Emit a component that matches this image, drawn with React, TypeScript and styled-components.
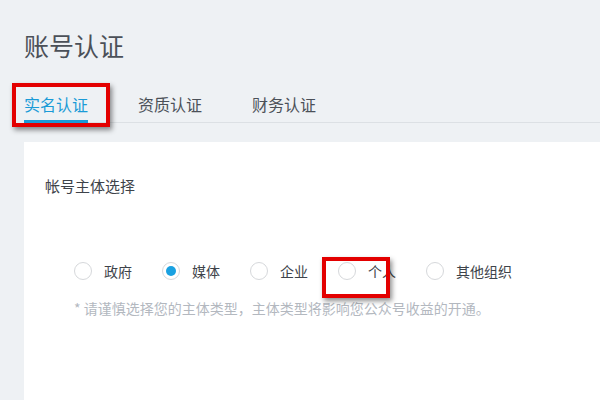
import styled, { createGlobalStyle } from "styled-components";

const GlobalStyle = createGlobalStyle`
  html, body {
    margin: 0;
    padding: 0;
    background: #eef1f4;
    font-family: "Noto Sans CJK SC", "Noto Sans", sans-serif;
  }
`;

const Page = styled.div`
  position: relative;
  width: 600px;
  height: 400px;
  overflow: hidden;
  background: #eef1f4;
  padding-left: 24px;
  box-sizing: border-box;
`;

const Title = styled.h1`
  margin: 0;
  padding-top: 27px;
  font-size: 25px;
  line-height: 36px;
  font-weight: 400;
  color: #4b5058;
`;

const TabBar = styled.div`
  display: flex;
  gap: 50px;
  margin-top: 30px;
  border-bottom: 1px solid #dce0e4;
`;

const Tab = styled.div<{ $active?: boolean }>`
  font-size: 16px;
  line-height: 22px;
  padding-bottom: 5px;
  color: ${({ $active }) => ($active ? "#1a9bd7" : "#4b5058")};
  border-bottom: 3px solid ${({ $active }) => ($active ? "#1a9bd7" : "transparent")};
  margin-bottom: -1px;
`;

const Card = styled.div`
  margin-top: 19px;
  background: #fff;
  height: 300px;
  padding: 32px 21px 0;
`;

const SectionTitle = styled.div`
  font-size: 15px;
  line-height: 24px;
  color: #3e434a;
`;

const RadioRow = styled.div`
  display: flex;
  align-items: center;
  gap: 30px;
  margin-top: 63px;
  padding-left: 29px;
`;

const RadioItem = styled.label`
  display: flex;
  align-items: center;
  gap: 12px;
  font-size: 14px;
  color: #3e434a;
  line-height: 20px;
`;

const Circle = styled.span<{ $checked?: boolean }>`
  width: 18px;
  height: 18px;
  box-sizing: border-box;
  border-radius: 50%;
  border: 1px solid #d6d8db;
  display: flex;
  align-items: center;
  justify-content: center;
  background: #fff;

  &::after {
    content: "";
    width: 10px;
    height: 10px;
    border-radius: 50%;
    background: ${({ $checked }) => ($checked ? "#1aa1e1" : "transparent")};
  }
`;

const Hint = styled.div`
  margin-top: 17px;
  padding-left: 29px;
  font-size: 14px;
  line-height: 20px;
  color: #b3b8bf;
`;

const Mark = styled.div<{ $x: number; $y: number; $w: number; $h: number }>`
  position: absolute;
  left: ${({ $x }) => $x}px;
  top: ${({ $y }) => $y}px;
  width: ${({ $w }) => $w}px;
  height: ${({ $h }) => $h}px;
  box-sizing: border-box;
  border: 4px solid #e30000;
  box-shadow: 2px 3px 5px rgba(0, 0, 0, 0.45);
  pointer-events: none;
`;

const options = ["政府", "媒体", "企业", "个人", "其他组织"];

const App = () => {
  return (
    <>
      <GlobalStyle />
      <Page>
        <Title>账号认证</Title>
        <TabBar>
          <Tab $active>实名认证</Tab>
          <Tab>资质认证</Tab>
          <Tab>财务认证</Tab>
        </TabBar>
        <Card>
          <SectionTitle>帐号主体选择</SectionTitle>
          <RadioRow>
            {options.map((o) => (
              <RadioItem key={o}>
                <Circle $checked={o === "媒体"} />
                {o}
              </RadioItem>
            ))}
          </RadioRow>
          <Hint>* 请谨慎选择您的主体类型，主体类型将影响您公众号收益的开通。</Hint>
        </Card>
        <Mark $x={12} $y={83} $w={98} $h={44} />
        <Mark $x={322} $y={257} $w={68} $h={41} />
      </Page>
    </>
  );
};

export default App;
